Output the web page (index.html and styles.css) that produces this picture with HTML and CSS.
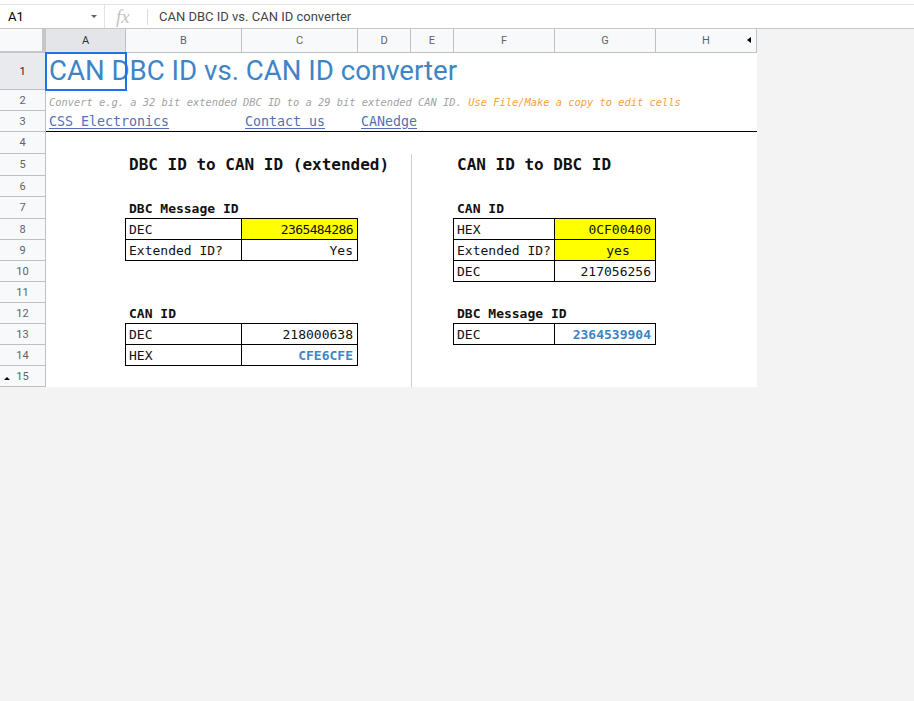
FILE: index.html
```html
<!DOCTYPE html>
<html lang="en">
<head>
<meta charset="utf-8">
<title>CAN DBC ID vs. CAN ID converter</title>
<link rel="stylesheet" href="styles.css">
</head>
<body>
<div class="topbar">
  <div class="fbar">
    <div class="namebox"><span class="cellref">A1</span><span class="dd"></span></div>
    <div class="fxbox"><span class="fx">fx</span><span class="fxsep"></span></div>
    <div class="ftext">CAN DBC ID vs. CAN ID converter</div>
  </div>
</div>

<div class="sheet">
  <div class="colhdr">
    <div class="corner"></div>
    <div class="ch sel">A</div>
    <div class="ch">B</div>
    <div class="ch">C</div>
    <div class="ch">D</div>
    <div class="ch">E</div>
    <div class="ch">F</div>
    <div class="ch">G</div>
    <div class="ch ch-last">H<span class="tri-left"></span></div>
  </div>

  <div class="row h37">
    <div class="rh sel">1</div>
    <div class="c title">CAN DBC ID vs. CAN ID converter</div>
    <div class="selbox"></div>
  </div>

  <div class="row">
    <div class="rh">2</div>
    <div class="c sub">Convert e.g. a 32 bit extended DBC ID to a 29 bit extended CAN ID.&nbsp;<span class="warn">Use File/Make a copy to edit cells</span></div>
  </div>

  <div class="row">
    <div class="rh">3</div>
    <div class="linkbar">
      <a class="c lnk" href="#">CSS Electronics</a>
      <a class="c lnk" href="#">Contact us</a>
      <a class="c lnk" href="#">CANedge</a>
    </div>
  </div>

  <div class="row h22">
    <div class="rh">4</div>
  </div>

  <div class="row h22">
    <div class="rh">5</div>
    <div class="c head colB">DBC ID to CAN ID (extended)</div>
    <div class="vsep"></div>
    <div class="c head colF">CAN ID to DBC ID</div>
  </div>

  <div class="row">
    <div class="rh">6</div>
    <div class="vsep"></div>
  </div>

  <div class="row h22">
    <div class="rh">7</div>
    <div class="c lbl colB">DBC Message ID</div>
    <div class="vsep"></div>
    <div class="c lbl colF">CAN ID</div>
  </div>

  <div class="row">
    <div class="rh">8</div>
    <div class="td first top colB">DEC</div>
    <div class="td top num yel r colC">2365484286</div>
    <div class="vsep"></div>
    <div class="td first top colF">HEX</div>
    <div class="td top yel r colG">0CF00400</div>
  </div>

  <div class="row">
    <div class="rh">9</div>
    <div class="td first colB">Extended ID?</div>
    <div class="td r colC">Yes</div>
    <div class="vsep"></div>
    <div class="td first colF">Extended ID?</div>
    <div class="td yel mid colG">yes</div>
  </div>

  <div class="row">
    <div class="rh">10</div>
    <div class="vsep"></div>
    <div class="td first colF">DEC</div>
    <div class="td r colG">217056256</div>
  </div>

  <div class="row">
    <div class="rh">11</div>
    <div class="vsep"></div>
  </div>

  <div class="row">
    <div class="rh">12</div>
    <div class="c lbl colB">CAN ID</div>
    <div class="vsep"></div>
    <div class="c lbl colF">DBC Message ID</div>
  </div>

  <div class="row">
    <div class="rh">13</div>
    <div class="td first top colB">DEC</div>
    <div class="td top r colC">218000638</div>
    <div class="vsep"></div>
    <div class="td first top colF">DEC</div>
    <div class="td top r res colG">2364539904</div>
  </div>

  <div class="row">
    <div class="rh">14</div>
    <div class="td first colB">HEX</div>
    <div class="td r res colC">CFE6CFE</div>
    <div class="vsep"></div>
  </div>

  <div class="row">
    <div class="rh rh-tri"><span class="tri-up"></span>15</div>
    <div class="vsep"></div>
  </div>
</div>
</body>
</html>
```

FILE: styles.css
```css
* { box-sizing: border-box; margin: 0; padding: 0; }

html, body { background: #f3f3f3; }

body {
  width: 914px;
  height: 701px;
  overflow: hidden;
  font-family: Roboto, "Liberation Sans", Arial, sans-serif;
  color: #000;
}

/* ---------- formula bar ---------- */
.topbar {
  background: #fff;
  padding-top: 4px;
}

.fbar {
  height: 25px;
  display: flex;
  border-top: 1px solid #e3e3e3;
  border-bottom: 1px solid #c7c7c7;
}

.namebox {
  width: 105px;
  display: flex;
  align-items: center;
  padding-left: 8px;
  padding-right: 7px;
  border-right: 1px solid #e3e3e3;
}

.cellref {
  font-size: 13px;
  color: #000;
}

.dd {
  margin-left: auto;
  width: 0;
  height: 0;
  border-left: 3px solid transparent;
  border-right: 3px solid transparent;
  border-top: 3px solid #5f6368;
}

.fxbox {
  width: 43px;
  display: flex;
  align-items: center;
  padding-left: 11px;
}

.fx {
  font-family: "Liberation Serif", "DejaVu Serif", serif;
  font-style: italic;
  font-size: 19px;
  color: #c4c4c4;
  line-height: 1;
}

.fxsep {
  margin-left: auto;
  width: 1px;
  height: 16px;
  background: #dadce0;
}

.ftext {
  display: flex;
  align-items: center;
  padding-left: 11px;
  font-size: 13px;
  color: #444;
}

/* ---------- sheet ---------- */
.sheet {
  width: 757px;
}

.colhdr,
.row {
  display: grid;
  grid-template-columns: 46px 80px 116px 116px 53px 43px 101px 101px 101px;
}

.colhdr {
  height: 24px;
  background: #f8f9fa;
}

.corner {
  background: #f8f9fa;
  border-right: 4px solid #c4c7c5;
  border-bottom: 2px solid #c4c7c5;
}

.ch {
  position: relative;
  border-right: 1px solid #c0c0c0;
  border-bottom: 1px solid #c0c0c0;
  display: flex;
  align-items: center;
  justify-content: center;
  font-size: 11px;
  color: #5f6368;
}

.ch.sel {
  background: #e3e5e8;
  color: #333;
}

.tri-left {
  position: absolute;
  right: 5px;
  top: 8px;
  width: 0;
  height: 0;
  border-top: 3.5px solid transparent;
  border-bottom: 3.5px solid transparent;
  border-right: 4px solid #000;
}

.row {
  height: 21px;
  background: #fff;
}

.row.h37 { height: 37px; }
.row.h22 { height: 22px; }

.rh {
  position: relative;
  grid-column: 1;
  background: #f8f9fa;
  border-right: 1px solid #c0c0c0;
  border-bottom: 1px solid #c0c0c0;
  display: flex;
  align-items: center;
  justify-content: center;
  font-size: 11px;
  color: #5f6368;
}

.rh.sel {
  background: #e8eaed;
  color: #202124;
}

.tri-up {
  position: absolute;
  left: 4px;
  top: 11px;
  width: 0;
  height: 0;
  border-left: 3px solid transparent;
  border-right: 3px solid transparent;
  border-bottom: 3px solid #000;
}

/* generic cell */
.c {
  display: flex;
  align-items: flex-end;
  padding: 0 3px 3px;
  white-space: nowrap;
  font-family: "DejaVu Sans Mono", "Liberation Mono", monospace;
  line-height: 1;
}

.colB { grid-column: 3 / span 2; }
.colF { grid-column: 7 / span 2; }
.td.colB { grid-column: 3; }
.td.colC { grid-column: 4; }
.td.colF { grid-column: 7; }
.td.colG { grid-column: 8; }

.title {
  grid-column: 2 / -1;
  grid-row: 1;
  font-family: Roboto, "Liberation Sans", Arial, sans-serif;
  font-size: 27.6px;
  color: #3d85c6;
  padding-bottom: 5px;
}

.selbox {
  position: relative;
  z-index: 2;
  grid-column: 2;
  grid-row: 1;
  margin: -1px;
  border: 2px solid #1a73e8;
}

.sub {
  grid-column: 2 / -1;
  font-size: 10.4px;
  font-style: italic;
  color: #a3a3a3;
  padding-bottom: 4px;
}

.warn { color: #f9a03f; }

.linkbar {
  grid-column: 2 / -1;
  display: grid;
  grid-template-columns: 196px 116px 1fr;
  border-bottom: 1px solid #000;
}

.lnk {
  font-size: 13.3px;
  color: #5470b8;
  text-decoration: underline;
  text-underline-offset: 2px;
}

.head {
  font-size: 16px;
  font-weight: bold;
  padding-bottom: 3px;
  color: #111;
}

.lbl {
  font-size: 13px;
  font-weight: bold;
  color: #111;
  padding-bottom: 4px;
}

.vsep {
  grid-column: 6;
  border-left: 1px solid #cfcfcf;
}

/* table cells */
.td {
  display: flex;
  align-items: flex-end;
  padding: 0 4px 3px 3px;
  white-space: nowrap;
  font-family: "DejaVu Sans Mono", "Liberation Mono", monospace;
  font-size: 13px;
  line-height: 1;
  color: #111;
  border-right: 1px solid #000;
  border-bottom: 1px solid #000;
}

.td.first {
  border-left: 1px solid #000;
  margin-left: -1px;
}

.td.top {
  border-top: 1px solid #000;
  margin-top: -1px;
}

.td.r { justify-content: flex-end; }

.td.mid {
  justify-content: center;
  padding-left: 30px;
}

.td.yel { background: #ffff00; }

.td.num { letter-spacing: -0.6px; }

.td.res {
  color: #3d85c6;
  font-weight: bold;
}
```
